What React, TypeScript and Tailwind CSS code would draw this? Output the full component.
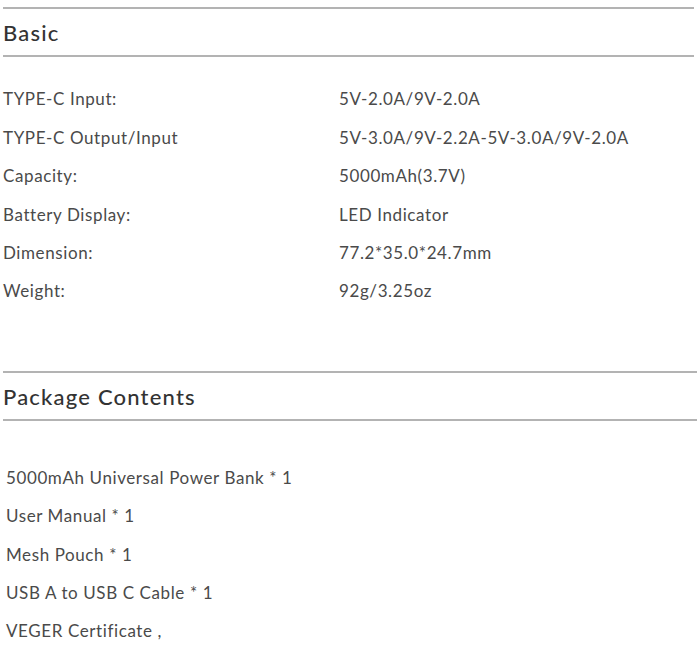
const specs = [
  ["TYPE-C Input:", "5V-2.0A/9V-2.0A"],
  ["TYPE-C Output/Input", "5V-3.0A/9V-2.2A-5V-3.0A/9V-2.0A"],
  ["Capacity:", "5000mAh(3.7V)"],
  ["Battery Display:", "LED Indicator"],
  ["Dimension:", "77.2*35.0*24.7mm"],
  ["Weight:", "92g/3.25oz"],
];

const contents = [
  "5000mAh Universal Power Bank * 1",
  "User Manual * 1",
  "Mesh Pouch * 1",
  "USB A to USB C Cable * 1",
  "VEGER Certificate ,",
];

function SectionHeader({ title, className }: { title: string; className?: string }) {
  return (
    <div className={className}>
      <div className="h-[2px] bg-[#b3b3b3]" />
      <h2 className="h-[46px] flex items-center text-[22px] font-medium tracking-[1.2px] text-[#333]">
        {title}
      </h2>
      <div className="h-[2px] bg-[#b3b3b3]" />
    </div>
  );
}

export default function App() {
  return (
    <div
      className="w-[700px] h-[646px] bg-white text-[#4a4a4a] overflow-hidden"
      style={{ fontFamily: "Lato, 'Open Sans', sans-serif" }}
    >
      <SectionHeader title="Basic" className="pt-[7px] pl-[3px] pr-[6px]" />

      <div className="mt-[23px] pl-[3px]">
        {specs.map(([label, value]) => (
          <div key={label} className="flex h-[38.4px] items-center text-[17px] tracking-[0.6px]">
            <span className="w-[336px]">{label}</span>
            <span>{value}</span>
          </div>
        ))}
      </div>

      <SectionHeader title="Package Contents" className="mt-[61px] pl-[3px] pr-[3px]" />

      <div className="mt-[37px] pl-[6px]">
        {contents.map((item) => (
          <div key={item} className="flex h-[38.4px] items-center text-[17px] tracking-[0.6px]">
            {item}
          </div>
        ))}
      </div>
    </div>
  );
}
